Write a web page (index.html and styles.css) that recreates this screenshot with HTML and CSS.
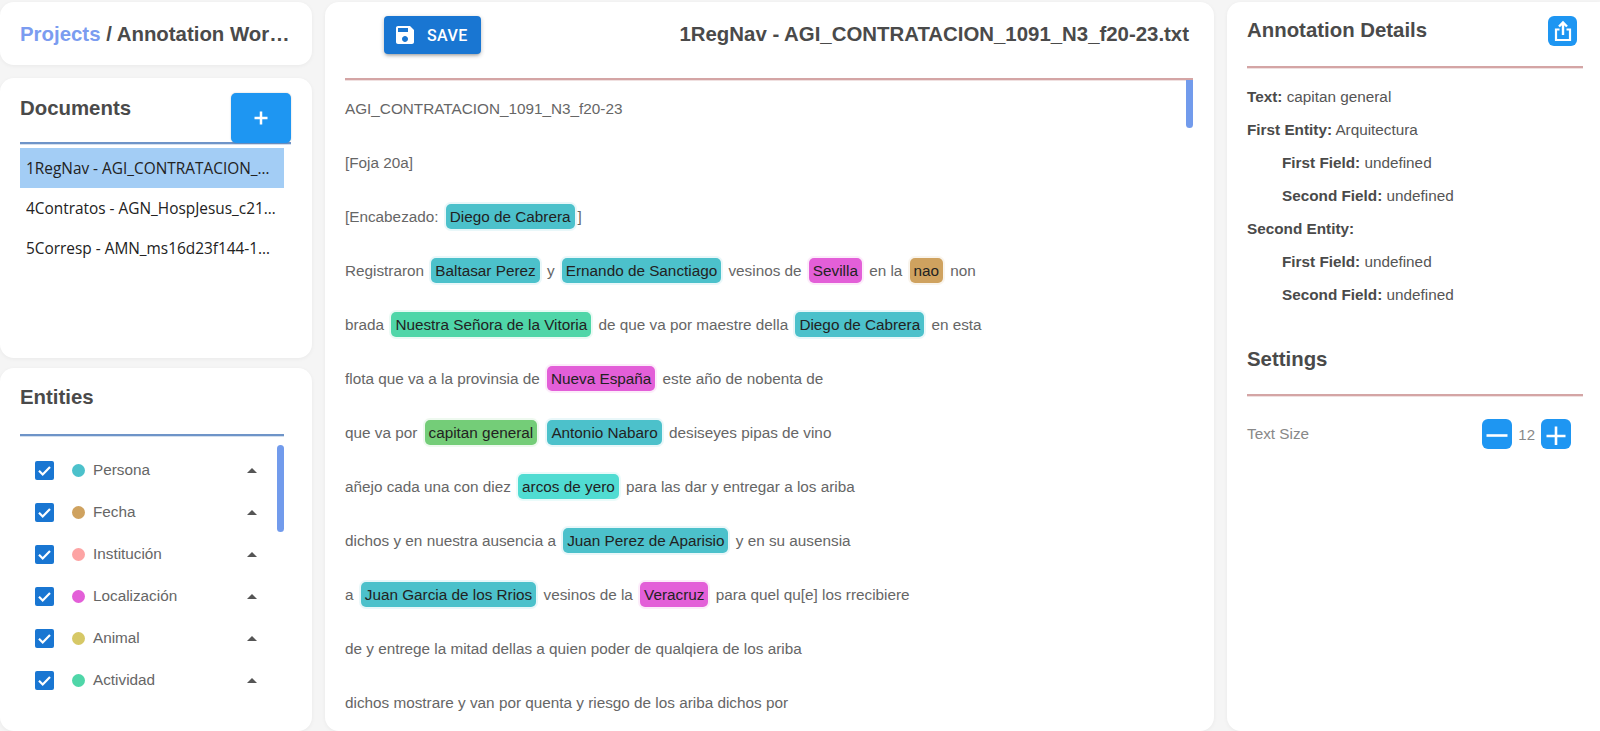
FILE: index.html
```html
<!DOCTYPE html>
<html lang="es">
<head>
<meta charset="utf-8">
<title>Annotation Workspace</title>
<link rel="stylesheet" href="styles.css">
</head>
<body>
<div class="app">
  <aside class="left">
    <section class="card crumb"><h1 class="crumb-text"><span class="link">Projects</span> / Annotation Workspace</h1></section>
    <section class="card docs">
      <div class="docs-head">
        <h2 class="h">Documents</h2>
        <button class="add" type="button"><svg width="14" height="14" viewBox="0 0 14 14"><path d="M7 0.5v13M0.5 7h13" stroke="#fff" stroke-width="2.500" fill="none"/></svg></button>
      </div>
      <ul class="doc-list">
        <li class="doc sel"><span class="doc-t">1RegNav - AGI_CONTRATACION_1091_N3_f20-23.txt</span></li>
        <li class="doc"><span class="doc-t">4Contratos - AGN_HospJesus_c212.txt</span></li>
        <li class="doc"><span class="doc-t">5Corresp - AMN_ms16d23f144-145.txt</span></li>
      </ul>
    </section>
    <section class="card ents">
      <h2 class="h ents-h">Entities</h2>
      <div class="ents-rule"></div>
      <div class="ent-list">
        <div class="ent"><span class="cb"><svg width="19" height="19" viewBox="0 0 19 19"><path d="M4 9.8l3.7 3.7L15 6" stroke="#fff" stroke-width="2.2" fill="none"/></svg></span><span class="dot c-per"></span><span class="ent-l">Persona</span><span class="caret"></span></div>
        <div class="ent"><span class="cb"><svg width="19" height="19" viewBox="0 0 19 19"><path d="M4 9.8l3.7 3.7L15 6" stroke="#fff" stroke-width="2.2" fill="none"/></svg></span><span class="dot c-fec"></span><span class="ent-l">Fecha</span><span class="caret"></span></div>
        <div class="ent"><span class="cb"><svg width="19" height="19" viewBox="0 0 19 19"><path d="M4 9.8l3.7 3.7L15 6" stroke="#fff" stroke-width="2.2" fill="none"/></svg></span><span class="dot c-ins"></span><span class="ent-l">Institución</span><span class="caret"></span></div>
        <div class="ent"><span class="cb"><svg width="19" height="19" viewBox="0 0 19 19"><path d="M4 9.8l3.7 3.7L15 6" stroke="#fff" stroke-width="2.2" fill="none"/></svg></span><span class="dot c-loc"></span><span class="ent-l">Localización</span><span class="caret"></span></div>
        <div class="ent"><span class="cb"><svg width="19" height="19" viewBox="0 0 19 19"><path d="M4 9.8l3.7 3.7L15 6" stroke="#fff" stroke-width="2.2" fill="none"/></svg></span><span class="dot c-ani"></span><span class="ent-l">Animal</span><span class="caret"></span></div>
        <div class="ent"><span class="cb"><svg width="19" height="19" viewBox="0 0 19 19"><path d="M4 9.8l3.7 3.7L15 6" stroke="#fff" stroke-width="2.2" fill="none"/></svg></span><span class="dot c-act"></span><span class="ent-l">Actividad</span><span class="caret"></span></div>
      </div>
      <div class="thumb ents-thumb"></div>
    </section>
  </aside>

  <main class="card mid">
    <header class="mid-head">
      <button class="save" type="button"><svg width="24" height="24" viewBox="0 0 24 24"><path fill="#fff" d="M17 3H5c-1.11 0-2 .9-2 2v14c0 1.100.89 2 2 2h14c1.100 0 2-.9 2-2V7l-4-4zm-5 16c-1.660 0-3-1.340-3-3s1.340-3 3-3 3 1.340 3 3-1.340 3-3 3zm3-10H5V5h10v4z"/></svg><span>SAVE</span></button>
      <h2 class="file">1RegNav - AGI_CONTRATACION_1091_N3_f20-23.txt</h2>
    </header>
    <div class="doc-body">
      <p class="line">AGI_CONTRATACION_1091_N3_f20-23</p>
      <p class="line">[Foja 20a]</p>
      <p class="line">[Encabezado: <span class="pill c-per">Diego de Cabrera</span>]</p>
      <p class="line">Registraron <span class="pill c-per">Baltasar Perez</span> y <span class="pill c-per">Ernando de Sanctiago</span> vesinos de <span class="pill c-loc">Sevilla</span> en la <span class="pill c-fec">nao</span> non</p>
      <p class="line">brada <span class="pill c-act">Nuestra Señora de la Vitoria</span> de que va por maestre della <span class="pill c-per">Diego de Cabrera</span> en esta</p>
      <p class="line">flota que va a la provinsia de <span class="pill c-loc">Nueva España</span> este año de nobenta de</p>
      <p class="line">que va por <span class="pill c-arq">capitan general</span> <span class="pill c-per">Antonio Nabaro</span> desiseyes pipas de vino</p>
      <p class="line">añejo cada una con diez <span class="pill c-obj">arcos de yero</span> para las dar y entregar a los ariba</p>
      <p class="line">dichos y en nuestra ausencia a <span class="pill c-per">Juan Perez de Aparisio</span> y en su ausensia</p>
      <p class="line">a <span class="pill c-per">Juan Garcia de los Rrios</span> vesinos de la <span class="pill c-loc">Veracruz</span> para quel qu[e] los rrecibiere</p>
      <p class="line">de y entrege la mitad dellas a quien poder de qualqiera de los ariba</p>
      <p class="line">dichos mostrare y van por quenta y riesgo de los ariba dichos por</p>
      <div class="thumb mid-thumb"></div>
    </div>
  </main>

  <aside class="card right">
    <div class="r-head">
      <h2 class="h">Annotation Details</h2>
      <button class="share" type="button"><svg width="22" height="24" viewBox="0 0 22 24"><path d="M11 16V4M7 7.500L11 3.500 15 7.500" stroke="#fff" stroke-width="2.400" fill="none"/><path d="M7.500 10.500H4V21H18V10.500H14.500" stroke="#fff" stroke-width="2.200" fill="none"/></svg></button>
    </div>
    <div class="details">
      <p class="d"><b>Text:</b> capitan general</p>
      <p class="d"><b>First Entity:</b> Arquitectura</p>
      <p class="d in"><b>First Field:</b> undefined</p>
      <p class="d in"><b>Second Field:</b> undefined</p>
      <p class="d"><b>Second Entity:</b></p>
      <p class="d in"><b>First Field:</b> undefined</p>
      <p class="d in"><b>Second Field:</b> undefined</p>
    </div>
    <h2 class="h set-h">Settings</h2>
    <div class="set-row">
      <span class="set-l">Text Size</span>
      <div class="stepper">
        <button class="step" type="button"><svg width="22" height="22" viewBox="0 0 22 22"><path d="M0.500 12.500h21" stroke="#fff" stroke-width="2.600"/></svg></button>
        <span class="num">12</span>
        <button class="step" type="button"><svg width="22" height="22" viewBox="0 0 22 22"><path d="M1.500 13h19M11 3.500v19" stroke="#fff" stroke-width="2.600"/></svg></button>
      </div>
    </div>
  </aside>
</div>
</body>
</html>
```

FILE: styles.css
```css
* { box-sizing: border-box; }
html, body { margin: 0; height: 100%; overflow: hidden; }
body { background: #f5f5f5; font-family: "Liberation Sans", Arial, sans-serif; color: #555; }
h1, h2, p, ul { margin: 0; padding: 0; }
button { border: 0; padding: 0; cursor: pointer; font-family: inherit; }

.app { display: flex; height: 731px; gap: 13px; padding-top: 2px; }
.card { background: #fff; border-radius: 14px; box-shadow: 0 1px 4px rgba(0,0,0,.05); }
.left { width: 312px; flex: none; display: flex; flex-direction: column; }
.h { font-size: 20.4px; font-weight: 700; color: #4a4a4a; line-height: 23px; }

.crumb { height: 63px; padding: 21px 20px 0; margin-bottom: 13px; }
.crumb-text { font-size: 20.4px; line-height: 23px; font-weight: 700; color: #4a4a4a; white-space: nowrap; overflow: hidden; text-overflow: ellipsis; width: 273px; }
.link { color: #7b9cf0; }

.docs { height: 280px; padding: 15px 21px 0 20px; margin-bottom: 10px; }
.docs-head { display: flex; justify-content: space-between; align-items: flex-start; height: 51px; border-bottom: 2px solid #6e94c8; box-shadow: 0 1px 0 rgba(110,148,200,.3); }
.docs-head .h { padding-top: 4px; }
.add { width: 60px; height: 50px; background: #1e96f2; border-radius: 5px; display: flex; align-items: center; justify-content: center; box-shadow: 0 0 2px rgba(0,0,0,.2); }
.doc-list { list-style: none; width: 264px; margin-top: 4px; }
.doc { height: 40px; padding: 0 6px; display: flex; align-items: center; font-family: "Open Sans", sans-serif; font-size: 15.4px; color: #222; }
.doc-t { display: block; white-space: nowrap; overflow: hidden; text-overflow: ellipsis; }
.sel { background: #a3cdf5; }

.ents { flex: 1; padding: 18px 28px 0 20px; position: relative; }
.ents-rule { border-bottom: 2px solid #6e94c8; box-shadow: 0 1px 0 rgba(110,148,200,.3); margin-top: 25px; }
.ent-list { padding: 13px 0 0 15px; }
.ent { height: 42px; display: flex; align-items: center; }
.cb { width: 19px; height: 19px; background: #1976d2; border-radius: 2px; display: block; flex: none; }
.cb svg { display: block; }
.dot { width: 13px; height: 13px; border-radius: 50%; margin-left: 18px; flex: none; }
.ent-l { font-size: 15.3px; color: #666; margin-left: 8px; flex: 1; }
.caret { width: 0; height: 0; border-left: 5px solid transparent; border-right: 5px solid transparent; border-bottom: 5px solid #555; margin-right: 27px; }
.thumb { position: absolute; width: 7px; background: #729bec; border-radius: 4px; }
.ents-thumb { left: 277px; top: 77px; height: 87px; }

.c-per { background: #4cc1cb; --ring: rgba(76,193,203,.12); }
.c-fec { background: #cfa25f; --ring: rgba(207,162,95,.12); }
.c-ins { background: #fda4a4; }
.c-loc { background: #e35fd8; --ring: rgba(227,95,216,.12); }
.c-ani { background: #d6c866; }
.c-act { background: #4fd6a8; --ring: rgba(79,214,168,.12); }
.c-arq { background: #74cd78; --ring: rgba(116,205,120,.12); }
.c-obj { background: #50dcd2; --ring: rgba(80,220,210,.12); }

.mid { width: 889px; flex: none; padding: 0 21px 0 20px; overflow: hidden; }
.mid-head { height: 78px; display: flex; justify-content: space-between; align-items: flex-start; border-bottom: 2px solid #d4a5a5; box-shadow: 0 1px 0 rgba(212,165,165,.35); padding: 14px 4px 0 39px; }
.save { width: 97px; height: 38px; background: #1976d2; color: #fff; border-radius: 4px; font-family: Roboto, sans-serif; font-size: 16px; font-weight: 500; letter-spacing: .4px; display: flex; align-items: center; gap: 10px; padding-left: 9px; box-shadow: 0 3px 3px -2px rgba(0,0,0,.2), 0 2px 4px rgba(0,0,0,.14), 0 1px 5px rgba(0,0,0,.12); }
.file { font-size: 20.4px; line-height: 23px; font-weight: 700; color: #4a4a4a; padding-top: 7px; }
.doc-body { position: relative; height: 660px; padding-top: 2px; }
.line { height: 54px; font-size: 15.3px; line-height: 54px; color: #666; white-space: nowrap; }
.pill { display: inline-block; line-height: 25px; padding: 0 4px; margin: 0 3px; border-radius: 5px; color: #222; box-shadow: 0 0 0 2px var(--ring); }
.mid-thumb { right: 0; top: 0; height: 48px; border-radius: 0 0 4px 4px; }

.right { flex: 1; padding: 0 17px 0 20px; border-radius: 14px 0 0 14px; }
.r-head { height: 66px; display: flex; justify-content: space-between; align-items: flex-start; border-bottom: 2px solid #d4a5a5; box-shadow: 0 1px 0 rgba(212,165,165,.35); padding: 14px 6px 0 0; }
.r-head .h { padding-top: 3px; }
.share { width: 29px; height: 30px; background: #1e96f2; border-radius: 6px; display: flex; align-items: center; justify-content: center; }
.details { padding-top: 12px; }
.d { height: 33px; font-size: 15.3px; line-height: 33px; color: #555; }
.d b { color: #4a4a4a; }
.in { padding-left: 35px; }
.set-h { margin-top: 37px; border-bottom: 2px solid #d4a5a5; box-shadow: 0 1px 0 rgba(212,165,165,.35); height: 48px; }
.set-row { display: flex; justify-content: space-between; align-items: center; height: 30px; margin-top: 23px; padding-right: 12px; }
.set-l { font-size: 15.3px; color: #888; }
.stepper { display: flex; align-items: center; gap: 6px; }
.step { width: 30px; height: 30px; background: #1e96f2; border-radius: 6px; display: flex; align-items: center; justify-content: center; }
.num { font-size: 15px; color: #888; }
```
